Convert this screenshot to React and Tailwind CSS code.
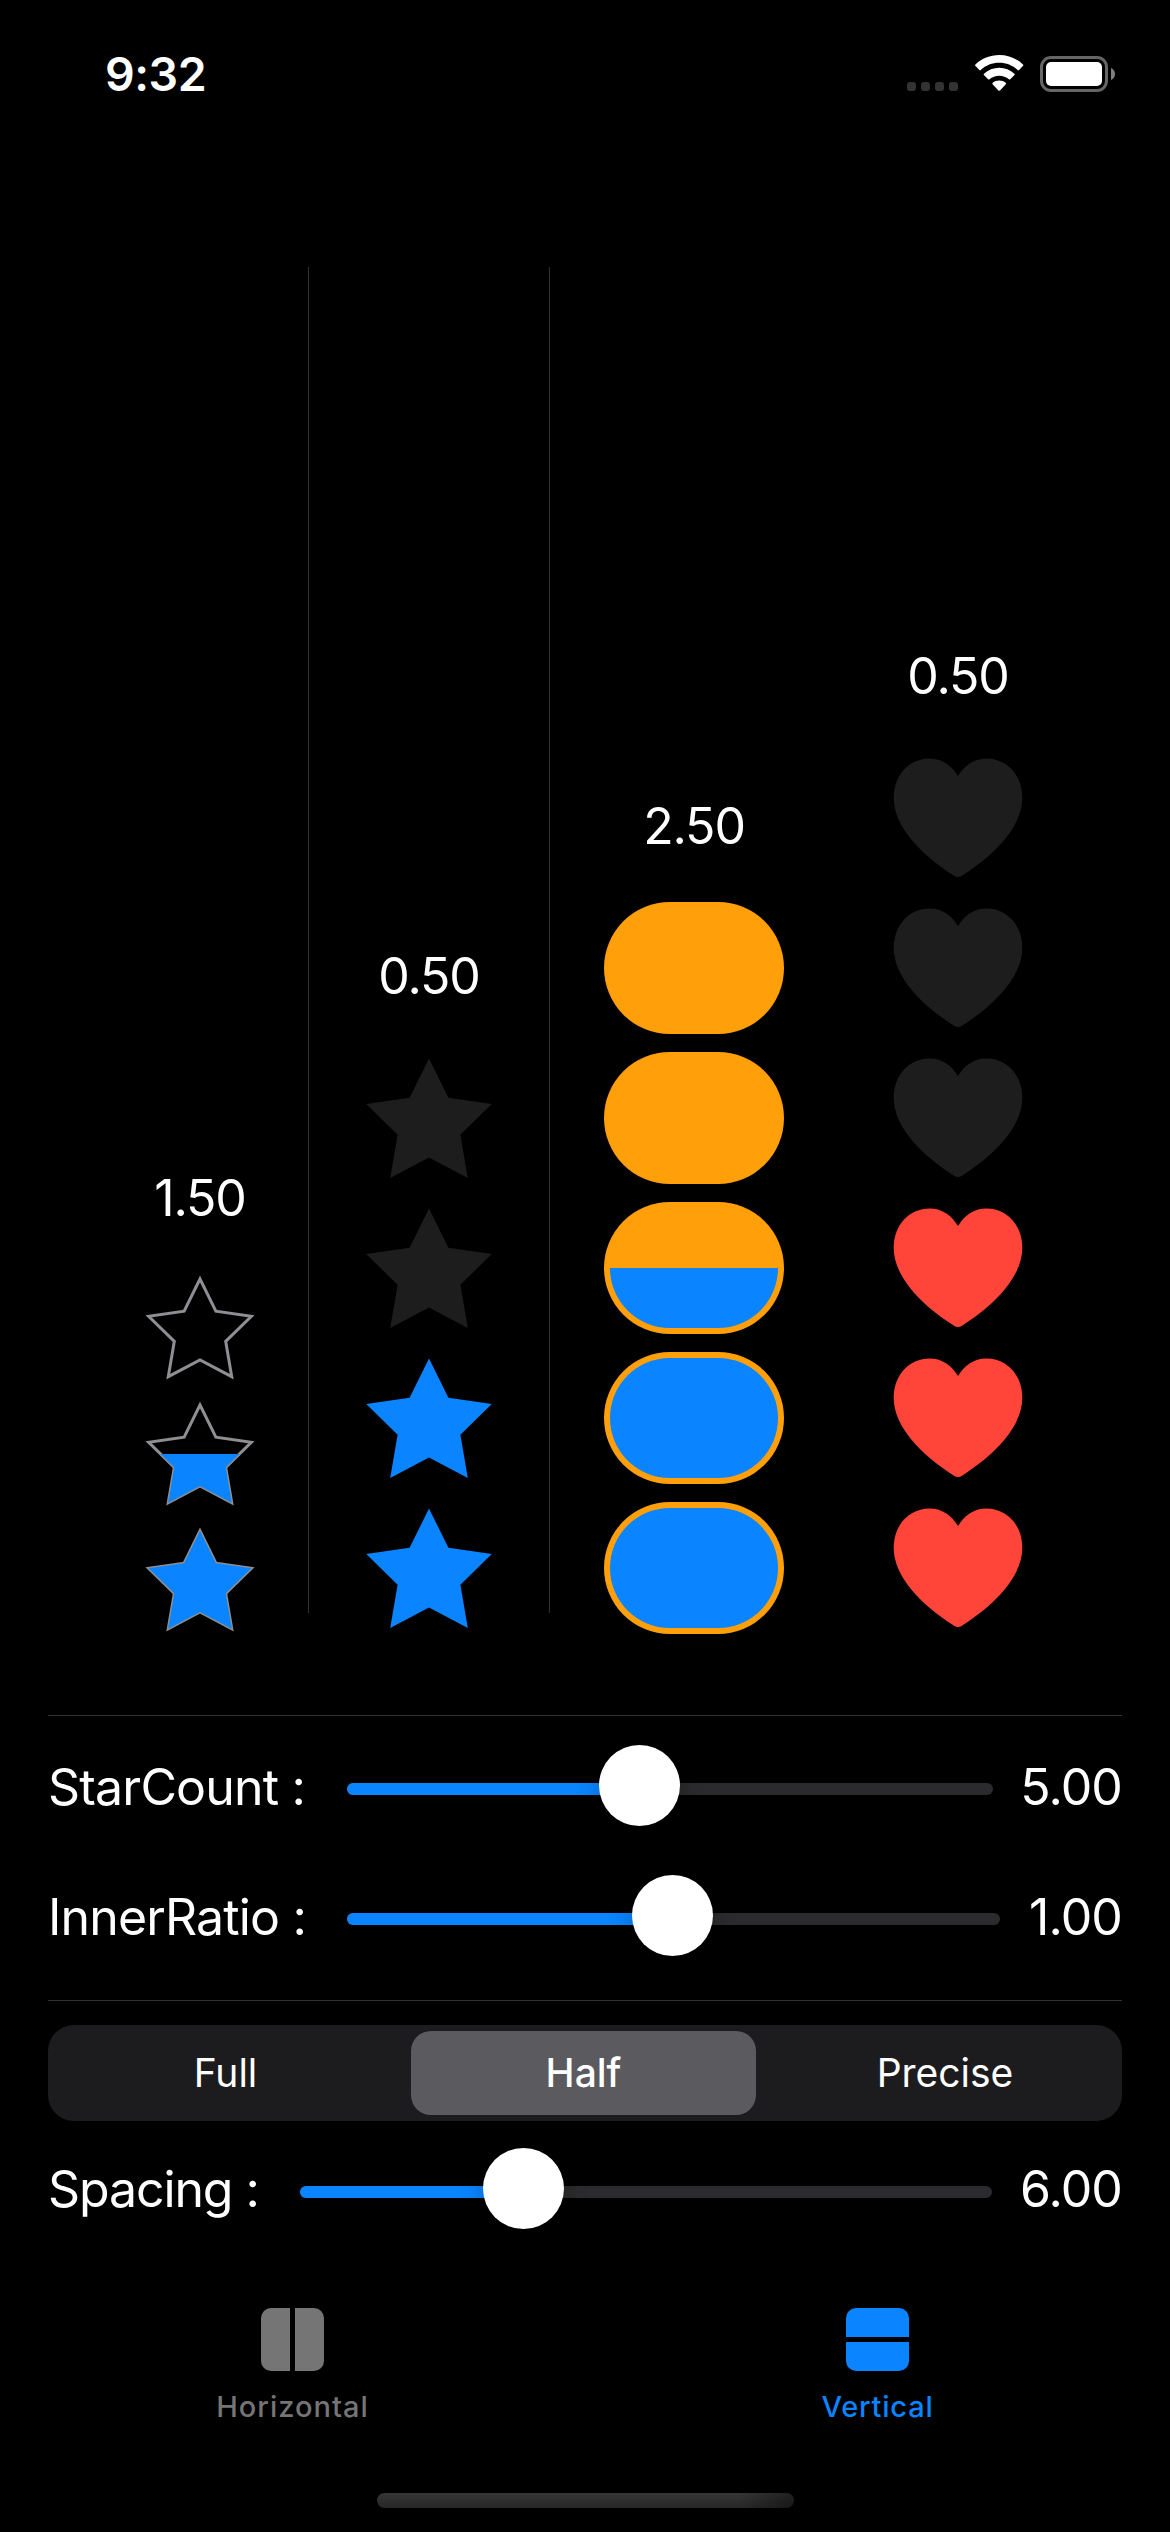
const OUTLINE_STAR =
  "60,11 75.87,43.16 111.36,48.31 85.68,73.34 91.74,108.69 60,92 28.26,108.69 34.32,73.34 8.64,48.31 44.13,43.16";
const SOLID_STAR =
  "72,12.5 91.4,51.8 134.77,58.1 103.38,88.7 110.79,131.9 72,111.5 33.21,131.9 40.62,88.7 9.23,58.1 52.6,51.8";
const HEART =
  "M72 30C66 20 56.5 12.5 43.7 12.5C23.5 12.5 7.7 28.5 7.7 52C7.7 80 34.5 108.5 67.3 129.2C69.6 130.7 70.8 131 72 131C73.2 131 74.4 130.7 76.7 129.2C109.5 108.5 136.3 80 136.3 52C136.3 28.5 120.5 12.5 100.3 12.5C87.5 12.5 78 20 72 30Z";

function OutlineStar({ fill }) {
  const top = 120 - 120 * fill;
  const id = `level-${fill * 100}`;
  return (
    <svg className="block h-[120px] w-[120px]" viewBox="0 0 120 120">
      <clipPath id={id}>
        <rect x="0" y={top} width="120" height={120 - top} />
      </clipPath>
      <polygon points={OUTLINE_STAR} fill="none" stroke="#8e8e93" strokeWidth="3" />
      <polygon points={OUTLINE_STAR} fill="#0a84ff" clipPath={`url(#${id})`} />
    </svg>
  );
}

function SolidStar({ on }) {
  return (
    <svg className="block h-36 w-36" viewBox="0 0 144 144">
      <polygon points={SOLID_STAR} fill={on ? "#0a84ff" : "#1d1d1d"} />
    </svg>
  );
}

function Heart({ on }) {
  return (
    <svg className="block h-36 w-36" viewBox="0 0 144 144">
      <path d={HEART} fill={on ? "#ff453a" : "#1d1d1d"} />
    </svg>
  );
}

function Capsule({ fill }) {
  return (
    <div className="my-[6px] h-[132px] w-[180px] rounded-full bg-[#ff9f0a] p-[6px]">
      <div className="flex h-[120px] w-[168px] flex-col justify-end overflow-hidden rounded-full">
        <div className="bg-[#0a84ff]" style={{ height: `${fill * 100}%` }} />
      </div>
    </div>
  );
}

function Rating({ value, className, children }) {
  return (
    <div className={`flex flex-col items-center ${className}`}>
      <span className="mb-10 text-[50px] leading-[60px] tracking-[-1.1px]">{value}</span>
      <div className="flex flex-col gap-[6px]">{children}</div>
    </div>
  );
}

function Slider({ label, labelClass, value, valueClass, trackClass, thumb }) {
  return (
    <div className="flex h-[81px] items-center">
      <span className={`flex-1 text-[50px] leading-[60px] whitespace-nowrap ${labelClass}`}>{label}</span>
      <div className={`relative mt-[7px] h-3 shrink-0 rounded-full bg-[#2b2b2d] ${trackClass}`}>
        <div className="h-3 rounded-full bg-[#0a84ff]" style={{ width: thumb + 40 }} />
        <div
          className="absolute -top-[38px] h-[81px] w-[81px] rounded-full bg-white shadow-[0_6px_24px_rgba(0,0,0,0.25)]"
          style={{ left: thumb }}
        />
      </div>
      <span className={`shrink-0 text-right text-[50px] leading-[60px] tracking-[-0.9px] ${valueClass}`}>{value}</span>
    </div>
  );
}

export default function App() {
  return (
    <div className="flex h-[2532px] w-[1170px] flex-col overflow-hidden bg-black font-['Inter','Liberation_Sans',sans-serif] text-white">
      <header className="flex h-[141px] shrink-0 justify-between pr-[55px] pl-[105px]">
        <span className="mt-[46px] h-14 text-[46.5px] leading-[56px] font-semibold tracking-[-0.5px]">9:32</span>
        <div className="mt-[55px] flex h-[37px] items-start">
          <div className="mt-[27px] mr-[17px] flex gap-[5px]">
            {[0, 1, 2, 3].map((i) => (
              <i key={i} className="h-[9px] w-[9px] rounded-[3px] bg-[#333]" />
            ))}
          </div>
          <svg className="mr-4 h-[37px] w-[49px]" viewBox="0 0 49 37" fill="#fff">
            <path d="M24.2 0C33.3 0 41.7 3.5 48 9.4c.5.5.5 1 .1 1.4l-4 4.1c-.5.4-1 .4-1.5 0C37.6 10.4 31.2 7.8 24.2 7.8S10.8 10.4 5.8 14.9c-.5.4-1 .4-1.5 0l-4-4.1c-.4-.4-.4-.9.1-1.4C6.7 3.5 15.1 0 24.2 0z" />
            <path d="M24.2 12.8c5.8 0 11.1 2.2 15.2 5.9.5.4.5.9.1 1.4l-4.2 4.1c-.4.4-.9.4-1.4.1-2.7-2.3-6-3.6-9.7-3.6s-7 1.3-9.7 3.6c-.5.3-1 .3-1.4-.1l-4.2-4.1c-.4-.5-.4-1 .1-1.4 4.1-3.7 9.4-5.9 15.2-5.9z" />
            <path d="M24.2 25.6c2.4 0 4.7.8 6.5 2.2.5.4.5.9.1 1.4l-5.8 6.2c-.5.6-1.1.6-1.6 0l-5.8-6.2c-.4-.5-.4-1 .1-1.4 1.8-1.4 4.1-2.2 6.5-2.2z" />
          </svg>
          <svg className="mt-px h-9 w-[75px]" viewBox="0 0 75 36">
            <rect x="1.5" y="1.5" width="65" height="33" rx="9.5" fill="none" stroke="#666" strokeWidth="3" />
            <rect x="6" y="6" width="56" height="24" rx="5" fill="#fff" />
            <path d="M71 12c2.6 1 4 3.4 4 6s-1.4 5-4 6z" fill="#808080" />
          </svg>
        </div>
      </header>

      <section className="flex h-[1499px] shrink-0 items-end pl-[140px]">
        <Rating value="1.50" className="w-[120px]">
          <OutlineStar fill={0} />
          <OutlineStar fill={0.5} />
          <OutlineStar fill={1} />
        </Rating>
        <div className="mb-[27px] ml-12 h-[1346px] w-px bg-[#323235]" />
        <Rating value="0.50" className="ml-12 w-36">
          <SolidStar />
          <SolidStar />
          <SolidStar on />
          <SolidStar on />
        </Rating>
        <div className="mb-[27px] ml-12 h-[1346px] w-px bg-[#323235]" />
        <Rating value="2.50" className="ml-[54px] w-[180px]">
          <Capsule fill={0} />
          <Capsule fill={0} />
          <Capsule fill={0.5} />
          <Capsule fill={1} />
          <Capsule fill={1} />
        </Rating>
        <Rating value="0.50" className="ml-[102px] w-36">
          <Heart />
          <Heart />
          <Heart />
          <Heart on />
          <Heart on />
          <Heart on />
        </Rating>
      </section>

      <section className="mt-[75px] flex shrink-0 flex-col px-12">
        <div className="mb-[29px] h-px bg-[#323235]" />
        <Slider
          label="StarCount :"
          labelClass="pt-[2px] tracking-[-0.8px]"
          value="5.00"
          valueClass="w-[129px] pt-[2px]"
          trackClass="w-[646px]"
          thumb={252}
        />
        <div className="h-[49px]" />
        <Slider
          label="InnerRatio :"
          labelClass="pt-[2px] tracking-[-0.85px]"
          value="1.00"
          valueClass="w-[122px] pt-[2px]"
          trackClass="w-[653px]"
          thumb={285}
        />
        <div className="mt-11 mb-6 h-px bg-[#323235]" />
        <div className="grid h-24 grid-cols-[363px_345px_366px] rounded-[26px] bg-[#1c1c1e] py-[6px] text-center text-[39px] leading-[84px]">
          <span className="-ml-2">Full</span>
          <span className="rounded-[20px] bg-[#5b5a5f] font-medium">Half</span>
          <span className="ml-3">Precise</span>
        </div>
        <div className="h-[27px]" />
        <Slider
          label="Spacing :"
          labelClass="tracking-[-1.1px]"
          value="6.00"
          valueClass="w-[130px]"
          trackClass="w-[692px]"
          thumb={183}
        />
      </section>

      <nav className="mt-[79px] grid shrink-0 grid-cols-2 text-[29px] leading-9 font-medium">
        <div className="flex flex-col items-center text-[#757575]">
          <div className="flex h-[63px] w-[63px] gap-[5px]">
            <i className="flex-1 rounded-l-[10px] bg-[#757575]" />
            <i className="flex-1 rounded-r-[10px] bg-[#757575]" />
          </div>
          <span className="mt-[18px] tracking-[1px]">Horizontal</span>
        </div>
        <div className="flex flex-col items-center text-[#0a84ff]">
          <div className="flex h-[63px] w-[63px] flex-col gap-[5px]">
            <i className="flex-1 rounded-t-[10px] bg-[#0a84ff]" />
            <i className="flex-1 rounded-b-[10px] bg-[#0a84ff]" />
          </div>
          <span className="mt-[18px] tracking-[0.8px]">Vertical</span>
        </div>
      </nav>
      <div className="mt-[68px] ml-[377px] flex h-[15px] w-[417px] shrink-0 justify-end overflow-hidden rounded-full bg-linear-to-b from-[#363636] to-[#272727]">
        <div className="w-14 bg-linear-to-r from-transparent to-black/40" />
      </div>
    </div>
  );
}
